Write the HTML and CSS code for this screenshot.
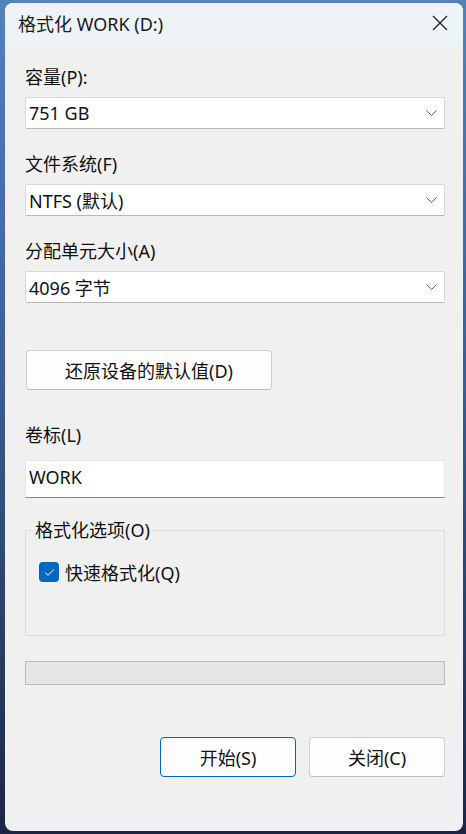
FILE: index.html
```html
<!DOCTYPE html>
<html lang="zh-CN">
<head>
<meta charset="utf-8">
<title>格式化 WORK (D:)</title>
<link rel="stylesheet" href="styles.css">
</head>
<body>
<div class="window">
  <div class="titlebar">
    <span class="title">格式化 WORK (D:)</span>
    <svg class="close" width="16" height="16" viewBox="0 0 16 16"><path d="M1 1L15 15M15 1L1 15" stroke="#1a1a1a" stroke-width="1.2" fill="none"/></svg>
  </div>
  <div class="content">
    <div class="label first">容量(P):</div>
    <div class="select"><span>751 GB</span><svg class="chev" width="11" height="6" viewBox="0 0 11 6"><path d="M0.5 0.5L5.5 5.5L10.5 0.5" stroke="#606060" stroke-width="1" fill="none"/></svg></div>
    <div class="label">文件系统(F)</div>
    <div class="select"><span>NTFS (默认)</span><svg class="chev" width="11" height="6" viewBox="0 0 11 6"><path d="M0.5 0.5L5.5 5.5L10.5 0.5" stroke="#606060" stroke-width="1" fill="none"/></svg></div>
    <div class="label">分配单元大小(A)</div>
    <div class="select"><span>4096 字节</span><svg class="chev" width="11" height="6" viewBox="0 0 11 6"><path d="M0.5 0.5L5.5 5.5L10.5 0.5" stroke="#606060" stroke-width="1" fill="none"/></svg></div>
    <div class="btn reset">还原设备的默认值(D)</div>
    <div class="label vol">卷标(L)</div>
    <div class="input">WORK</div>
    <fieldset class="group">
      <legend>格式化选项(O)</legend>
      <div class="check-row">
        <span class="checkbox"><svg width="11" height="9" viewBox="0 0 11 9"><path d="M1.2 4.6L4 7.3L9.8 1.6" stroke="#fff" stroke-width="1" fill="none"/></svg></span>
        <span>快速格式化(Q)</span>
      </div>
    </fieldset>
    <div class="progress"></div>
    <div class="actions">
      <div class="btn primary">开始(S)</div>
      <div class="btn">关闭(C)</div>
    </div>
  </div>
</div>
</body>
</html>
```
FILE: styles.css
```css
html, body {
  margin: 0;
  padding: 0;
}
body {
  width: 466px;
  height: 834px;
  overflow: hidden;
  background: linear-gradient(to bottom, #5283b8 0%, #3a5f92 45%, #1c2546 100%);
  font-family: "Noto Sans", "Noto Sans CJK SC", sans-serif;
  font-size: 18px;
  color: #111;
}
.window {
  margin: 3px 0 0 5px;
  width: 458px;
  height: 828px;
  border-radius: 8px;
  background: #f0f0f0;
  overflow: hidden;
}
.titlebar {
  height: 42px;
  background: #eef3f8;
  display: flex;
  align-items: center;
  justify-content: space-between;
  padding: 0 15px 0 13px;
}
.title {
  font-size: 18px;
  line-height: 22px;
  color: #1a1a1a;
}
.close {
  display: block;
  margin-top: -2px;
}
.content {
  padding: 0 18px 0 20px;
}
.label {
  height: 22px;
  line-height: 22px;
  margin-top: 24px;
  margin-bottom: 9px;
}
.label.first {
  margin-top: 21px;
}
.select {
  height: 32px;
  box-sizing: border-box;
  background: #fff;
  border: 1px solid #d9d9d9;
  border-bottom-color: #b8b8b8;
  border-radius: 2px;
  display: flex;
  align-items: center;
  justify-content: space-between;
  padding: 0 7px 0 3px;
}
.chev {
  display: block;
}
.btn {
  box-sizing: border-box;
  height: 40px;
  background: #fdfdfd;
  border: 1px solid #d0d0d0;
  border-bottom-color: #bcbcbc;
  border-radius: 4px;
  display: flex;
  align-items: center;
  justify-content: center;
}
.reset {
  width: 246px;
  margin: 47px 0 0 1px;
}
.label.vol {
  margin-top: 34px;
  margin-bottom: 14px;
}
.input {
  box-sizing: border-box;
  height: 38px;
  background: #fff;
  border: 1px solid #e6e6e6;
  border-bottom: 1px solid #8a8a8a;
  padding: 0 3px 4px;
  display: flex;
  align-items: center;
}
.group {
  margin: 21px 0 0 0;
  padding: 21px 12px 53px 13px;
  border: 1px solid #dcdcdc;
  min-width: 0;
}
.group legend {
  padding: 0 2px;
  margin-left: -6px;
  line-height: 22px;
  height: 22px;
}
.check-row {
  display: flex;
  align-items: center;
  gap: 6px;
  height: 20px;
}
.checkbox {
  width: 20px;
  height: 20px;
  box-sizing: border-box;
  border-radius: 4px;
  background: #0067c0;
  display: flex;
  align-items: center;
  justify-content: center;
}
.checkbox svg {
  display: block;
}
.progress {
  margin-top: 25px;
  height: 24px;
  box-sizing: border-box;
  background: #e6e6e6;
  border: 1px solid #bcbcbc;
}
.actions {
  margin-top: 52px;
  display: flex;
  justify-content: flex-end;
  gap: 13px;
}
.actions .btn {
  width: 136px;
}
.actions .btn.primary {
  border: 1px solid #0067c0;
}
```
